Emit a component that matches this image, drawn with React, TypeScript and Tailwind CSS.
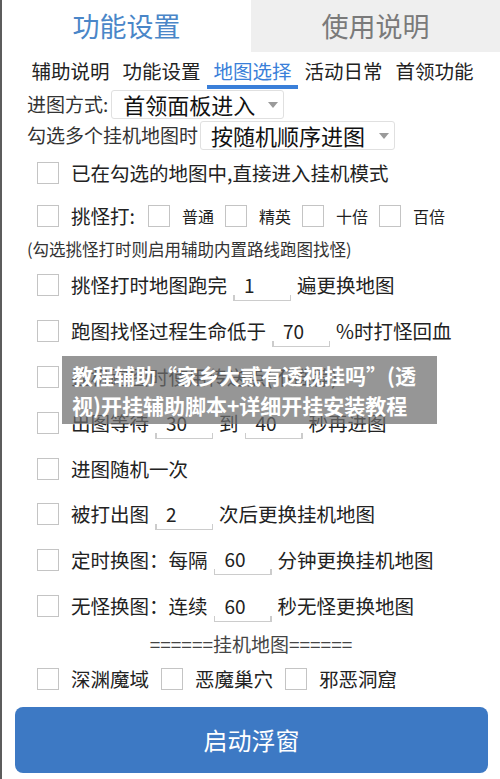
const font = "font-['Noto_Sans_CJK_SC','Noto_Sans',sans-serif]";

function Check() {
  return <div className="w-[22px] h-[22px] shrink-0 border-[1.5px] border-[#c4c4c4] bg-white" />;
}

function Num({ v }: { v: string }) {
  return (
    <div className="relative w-[58px] h-[31px] mx-[6px] pl-[11px] shrink-0 text-[19px] leading-[30px] border-b-[1.5px] border-[#cccccc]">
      {v}
      <span className="absolute left-0 bottom-0 h-[5px] w-[1.5px] bg-[#cccccc]" />
      <span className="absolute right-0 bottom-0 h-[5px] w-[1.5px] bg-[#cccccc]" />
    </div>
  );
}

function Arrow() {
  return (
    <svg width="10" height="6" viewBox="0 0 10 6" className="shrink-0">
      <path d="M0 0 L10 0 L5 6 Z" fill="#9a9a9a" />
    </svg>
  );
}

function Row({ h, children }: { h: string; children: React.ReactNode }) {
  return (
    <div className={`flex items-center ${h}`}>
      <Check />
      <div className="ml-[12px] flex items-center whitespace-nowrap">{children}</div>
    </div>
  );
}

const subTabs = ['辅助说明', '功能设置', '地图选择', '活动日常', '首领功能'];

export default function App() {
  return (
    <div className={`relative w-[500px] h-[779px] bg-white border-l-2 border-[#5c5c5c] overflow-hidden flex flex-col text-[#222] ${font}`}>
      {/* top tabs */}
      <div className="grid grid-cols-2 h-[52px] shrink-0">
        <div className="flex items-center justify-center text-[27px] text-[#4a86c8]">功能设置</div>
        <div className="flex items-center justify-center bg-[#efefef] text-[27px] text-[#7a7a7a]">使用说明</div>
      </div>

      {/* sub tabs */}
      <div className="flex pl-[23px] h-[37px] shrink-0">
        {subTabs.map((t, i) => (
          <div
            key={t}
            className={
              i === 2
                ? 'w-[91px] flex items-center justify-center text-[19.5px] text-[#3a7fd9] border-b-4 border-[#3a7fd9] pt-[5px]'
                : 'w-[91px] flex items-center justify-center text-[19.5px] text-[#222] border-b-4 border-transparent pt-[5px]'
            }
          >
            {t}
          </div>
        ))}
      </div>

      {/* scroll content */}
      <div className="h-[604px] overflow-hidden shrink-0">
        <div className="pl-[25px] pt-[1px] flex flex-col gap-[2px] text-[19px] text-[#333]">
          <div className="flex items-center">
            <span>进图方式:</span>
            <div className="ml-[3px] w-[173px] h-[29px] flex items-center justify-between border border-[#e0e0e0] rounded-[3px] pl-[11px] pr-[5px] text-[22px] text-[#111]">
              <span>首领面板进入</span>
              <Arrow />
            </div>
          </div>
          <div className="flex items-center">
            <span>勾选多个挂机地图时</span>
            <div className="ml-[2px] w-[195px] h-[29px] flex items-center justify-between border border-[#e0e0e0] rounded-[3px] pl-[10px] pr-[5px] text-[22px] text-[#111]">
              <span>按随机顺序进图</span>
              <Arrow />
            </div>
          </div>
        </div>

        <div className="pl-[35px] flex flex-col text-[19.5px] text-[#222]">
          <Row h="h-[46px]">已在勾选的地图中,直接进入挂机模式</Row>
          <Row h="h-[40px]">
            <span>挑怪打:</span>
            <div className="ml-[13px] flex items-center gap-[11px] text-[16px]">
              {['普通', '精英', '十倍', '百倍'].map((t) => (
                <div key={t} className="flex items-center gap-[12px]">
                  <Check />
                  <span>{t}</span>
                </div>
              ))}
            </div>
          </Row>
          <div className="-ml-[10px] h-[26px] flex items-center text-[16.5px] text-[#333]">
            (勾选挑怪打时则启用辅助内置路线跑图找怪)
          </div>
          <Row h="h-[46px]">
            <span>挑怪打时地图跑完</span>
            <Num v="1" />
            <span>遍更换地图</span>
          </Row>
          <Row h="h-[46px]">
            <span>跑图找怪过程生命低于</span>
            <Num v="70" />
            <span>%时打怪回血</span>
          </Row>
          <Row h="h-[46px]">挂机跑图时使用传送点(不推荐)</Row>
          <Row h="h-[46px]">
            <span>出图等待</span>
            <Num v="30" />
            <span>到</span>
            <Num v="40" />
            <span>秒再进图</span>
          </Row>
          <Row h="h-[46px]">进图随机一次</Row>
          <Row h="h-[44px]">
            <span>被打出图</span>
            <Num v="2" />
            <span>次后更换挂机地图</span>
          </Row>
          <Row h="h-[47px]">
            <span>定时换图：每隔</span>
            <Num v="60" />
            <span>分钟更换挂机地图</span>
          </Row>
          <Row h="h-[46px]">
            <span>无怪换图：连续</span>
            <Num v="60" />
            <span>秒无怪更换地图</span>
          </Row>
          <div className="h-[30px] -ml-[35px] flex items-center justify-center text-[19px] text-[#444]">
            ======挂机地图======
          </div>
          <div className="h-[40px] flex items-center gap-[12px] leading-[20px]">
            <Check />
            <span>深渊魔域</span>
            <Check />
            <span>恶魔巢穴</span>
            <Check />
            <span>邪恶洞窟</span>
          </div>
        </div>
      </div>

      {/* button */}
      <div className="pt-[14px] pl-[13px] pr-[12px]">
        <div className="h-[66px] rounded-[8px] bg-[#3d79c4] flex items-center justify-center text-[24px] text-white">
          启动浮窗
        </div>
      </div>

      {/* watermark overlay */}
      <div className="absolute left-[60px] top-[356px] w-[375px] px-[10px] py-[4px] bg-[rgba(110,110,110,0.72)] text-white font-bold text-[21px] leading-[30px] whitespace-nowrap">
        教程辅助“家乡大贰有透视挂吗”(透
        <br />
        视)开挂辅助脚本+详细开挂安装教程
      </div>
    </div>
  );
}
